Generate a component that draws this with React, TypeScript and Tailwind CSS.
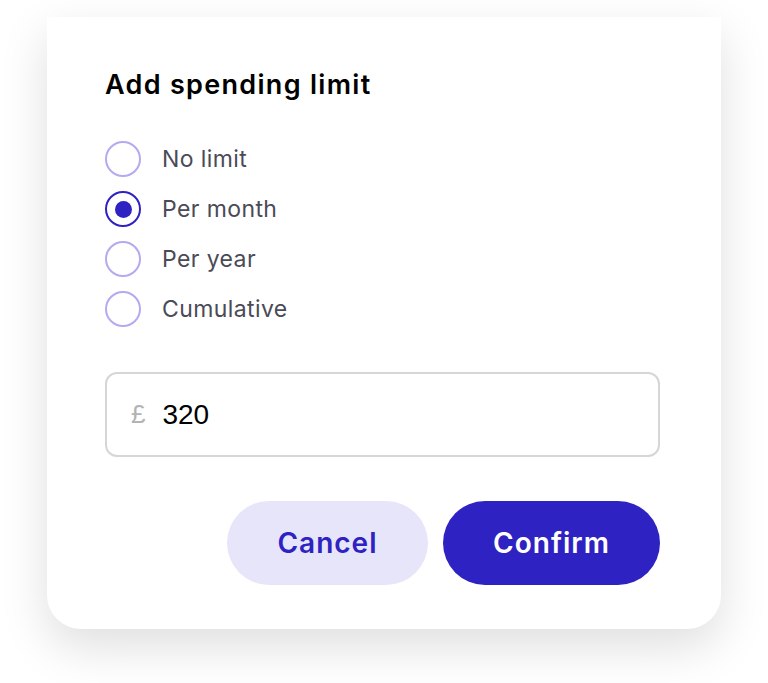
import React, { useState } from 'react';

const options = ['No limit', 'Per month', 'Per year', 'Cumulative'];

export default function App() {
  const [selected, setSelected] = useState('Per month');

  return (
    <div className="min-h-screen bg-white font-['Inter',sans-serif]">
      <div className="ml-[47px] mt-[17px] w-[674px] rounded-b-[34px] bg-white pt-[52px] pb-[44px] pl-[58px] pr-[61px] shadow-[0_18px_48px_rgba(0,0,0,0.13)]">
        <h2 className="text-[27px] font-semibold leading-[32px] tracking-[1.3px] text-black">
          Add spending limit
        </h2>

        {/* Radio options */}
        <div className="mt-[40px] flex flex-col gap-[14px]">
          {options.map((opt) => {
            const active = opt === selected;
            return (
              <button
                key={opt}
                onClick={() => setSelected(opt)}
                className="flex h-[36px] items-center gap-[21px] text-left"
              >
                <span
                  className={
                    active
                      ? 'flex h-[36px] w-[36px] items-center justify-center rounded-full border-2 border-[#2e22c2]'
                      : 'flex h-[36px] w-[36px] items-center justify-center rounded-full border-2 border-[#b3abf1]'
                  }
                >
                  {active && <span className="h-[17px] w-[17px] rounded-full bg-[#2e22c2]" />}
                </span>
                <span className="text-[23px] tracking-[0.4px] text-[#4b4a57]">{opt}</span>
              </button>
            );
          })}
        </div>

        {/* Amount input */}
        <div className="mt-[45px] flex h-[85px] items-center rounded-[12px] border-2 border-[#d6d6d6] pl-[24px]">
          <span className="font-['Liberation_Sans',sans-serif] text-[26px] text-[#b3b3b3]">£</span>
          <span className="ml-[17px] font-['Liberation_Sans',sans-serif] text-[28px] text-black">320</span>
        </div>

        {/* Actions */}
        <div className="mt-[44px] flex justify-end gap-[15px]">
          <button className="h-[84px] w-[201px] rounded-full bg-[#e7e5f9] text-[28px] font-semibold tracking-[1px] text-[#2e22c2]">
            Cancel
          </button>
          <button className="h-[84px] w-[217px] rounded-full bg-[#2e22c2] text-[28px] font-semibold tracking-[1px] text-white">
            Confirm
          </button>
        </div>
      </div>
    </div>
  );
}
